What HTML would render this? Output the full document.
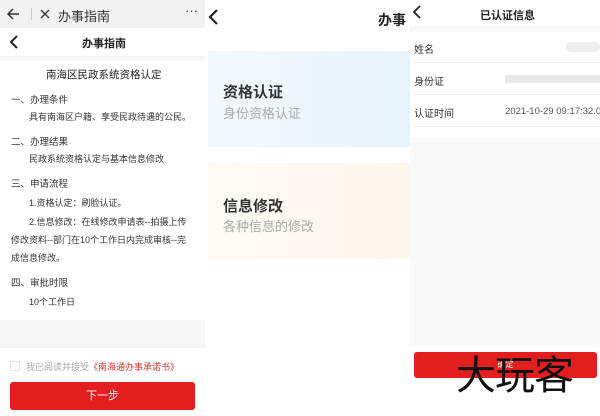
<!DOCTYPE html><html><head><meta charset="utf-8"><style>
*{margin:0;padding:0;box-sizing:border-box}
body{width:600px;height:416px;overflow:hidden;background:#fff;font-family:"Liberation Sans","Noto Sans CJK SC",sans-serif;color:#222;position:relative}
.a{position:absolute;white-space:nowrap}
</style></head><body>
<!-- panel 1 -->
<div class="a" style="left:0;top:0;width:205px;height:28px;background:#f2f2f2"></div>
<svg class="a" style="left:6px;top:7px" width="14" height="14" viewBox="0 0 14 14"><path d="M13 7H2M7 2L2 7l5 5" stroke="#333" stroke-width="1.5" fill="none"/></svg>
<div class="a" style="left:31px;top:8px;width:1px;height:12px;background:#ccc"></div>
<svg class="a" style="left:40px;top:9px" width="10" height="10"><path d="M1 1l8 8M9 1l-8 8" stroke="#333" stroke-width="1.3"/></svg>
<div class="a" style="left:58px;top:6px;font-size:13px;color:#333">办事指南</div>
<div class="a" style="left:185px;top:3px;font-size:13px;color:#333">···</div>
<div class="a" style="left:0;top:28px;width:205px;height:29px;background:#fff;border-bottom:1px solid #f0f0f0"></div>
<svg class="a" style="left:9px;top:35px" width="10" height="14"><path d="M8 1L2 7l6 6" stroke="#222" stroke-width="2" fill="none"/></svg>
<div class="a" style="left:82px;top:35px;font-size:11px;font-weight:bold">办事指南</div>
<div class="a" style="left:0;top:57px;width:205px;height:4px;background:#f7f7f7"></div>
<div class="a" style="left:46px;top:67px;font-size:10.5px">南海区民政系统资格认定</div>
<div class="a" style="left:11px;top:92px;font-size:9.5px;color:#333">一、办理条件</div>
<div class="a" style="left:29px;top:110px;font-size:9px;color:#333">具有南海区户籍、享受民政待遇的公民。</div>
<div class="a" style="left:11px;top:134px;font-size:9.5px;color:#333">二、办理结果</div>
<div class="a" style="left:29px;top:152px;font-size:9px;color:#333">民政系统资格认定与基本信息修改</div>
<div class="a" style="left:11px;top:176px;font-size:9.5px;color:#333">三、申请流程</div>
<div class="a" style="left:29px;top:196px;font-size:9px;color:#333">1.资格认定：刷脸认证。</div>
<div class="a" style="left:29px;top:215px;font-size:9px;color:#333">2.信息修改：在线修改申请表--拍摄上传</div>
<div class="a" style="left:11px;top:233px;font-size:9px;color:#333">修改资料--部门在10个工作日内完成审核--完</div>
<div class="a" style="left:11px;top:251px;font-size:9px;color:#333">成信息修改。</div>
<div class="a" style="left:11px;top:275px;font-size:9.5px;color:#333">四、审批时限</div>
<div class="a" style="left:29px;top:295px;font-size:9px;color:#333">10个工作日</div>
<div class="a" style="left:0;top:320px;width:205px;height:28px;background:#f6f6f6"></div>
<div class="a" style="left:10px;top:361px;width:10px;height:10px;border:1px solid #e4e4e4;border-radius:2px"></div>
<div class="a" style="left:26px;top:360px;font-size:9px;color:#aaa">我已阅读并接受<span style="color:#d0342c">《南海通办事承诺书》</span></div>
<div class="a" style="left:10px;top:382px;width:185px;height:28px;background:#e31e1e;border-radius:3px;color:#fff;font-size:11px;text-align:center;line-height:28px">下一步</div>
<!-- panel 2 -->
<svg class="a" style="left:207px;top:8px" width="12" height="18"><path d="M10 2L3 9l7 7" stroke="#222" stroke-width="2.2" fill="none"/></svg>
<div class="a" style="left:378px;top:10px;font-size:14px;font-weight:bold">办事</div>
<div class="a" style="left:208px;top:51px;width:202px;height:96px;background:linear-gradient(90deg,#f3f8fd,#e7f3fc)"></div>
<div class="a" style="left:223px;top:81px;font-size:15px;font-weight:bold;color:#333">资格认证</div>
<div class="a" style="left:223px;top:103px;font-size:13px;color:#aaa">身份资格认证</div>
<div class="a" style="left:208px;top:163px;width:202px;height:96px;background:linear-gradient(90deg,#fdfaf5,#fcf5ec)"></div>
<div class="a" style="left:223px;top:195px;font-size:15px;font-weight:bold;color:#333">信息修改</div>
<div class="a" style="left:223px;top:216px;font-size:13px;color:#aaa">各种信息的修改</div>
<!-- panel 3 -->
<div class="a" style="left:410px;top:0;width:190px;height:416px;background:#fff"></div>
<svg class="a" style="left:412px;top:5px" width="10" height="14"><path d="M8 1L2 7l6 6" stroke="#222" stroke-width="1.8" fill="none"/></svg>
<div class="a" style="left:480px;top:7px;font-size:11px;font-weight:bold">已认证信息</div>
<div class="a" style="left:410px;top:26px;width:190px;height:6px;background:#f7f7f7"></div>
<div class="a" style="left:414px;top:41px;font-size:10px;color:#333">姓名</div>
<div class="a" style="left:566px;top:42px;width:34px;height:10px;background:#eee;border-radius:5px"></div>
<div class="a" style="left:414px;top:62px;width:186px;height:1px;background:#eee"></div>
<div class="a" style="left:414px;top:73px;font-size:10px;color:#333">身份证</div>
<div class="a" style="left:505px;top:75px;width:95px;height:8px;background:#e8e8e8"></div>
<div class="a" style="left:414px;top:94px;width:186px;height:1px;background:#eee"></div>
<div class="a" style="left:414px;top:105px;font-size:10px;color:#333">认证时间</div>
<div class="a" style="left:505px;top:106px;font-size:9.5px;color:#555">2021-10-29 09:17:32.0</div>
<div class="a" style="left:414px;top:126px;width:186px;height:1px;background:#eee"></div>
<div class="a" style="left:410px;top:138px;width:190px;height:207px;background:#f8f8f8"></div>
<div class="a" style="left:414px;top:352px;width:183px;height:26px;background:#e31e1e;border-radius:3px;color:#fff;font-size:8px;text-align:center;line-height:26px">确定</div>
<div class="a" style="left:456px;top:348px;font-size:40px;color:#111;font-family:'Noto Sans CJK SC',sans-serif;font-weight:400;letter-spacing:-1px;line-height:48px">大玩客</div>
</body></html>
